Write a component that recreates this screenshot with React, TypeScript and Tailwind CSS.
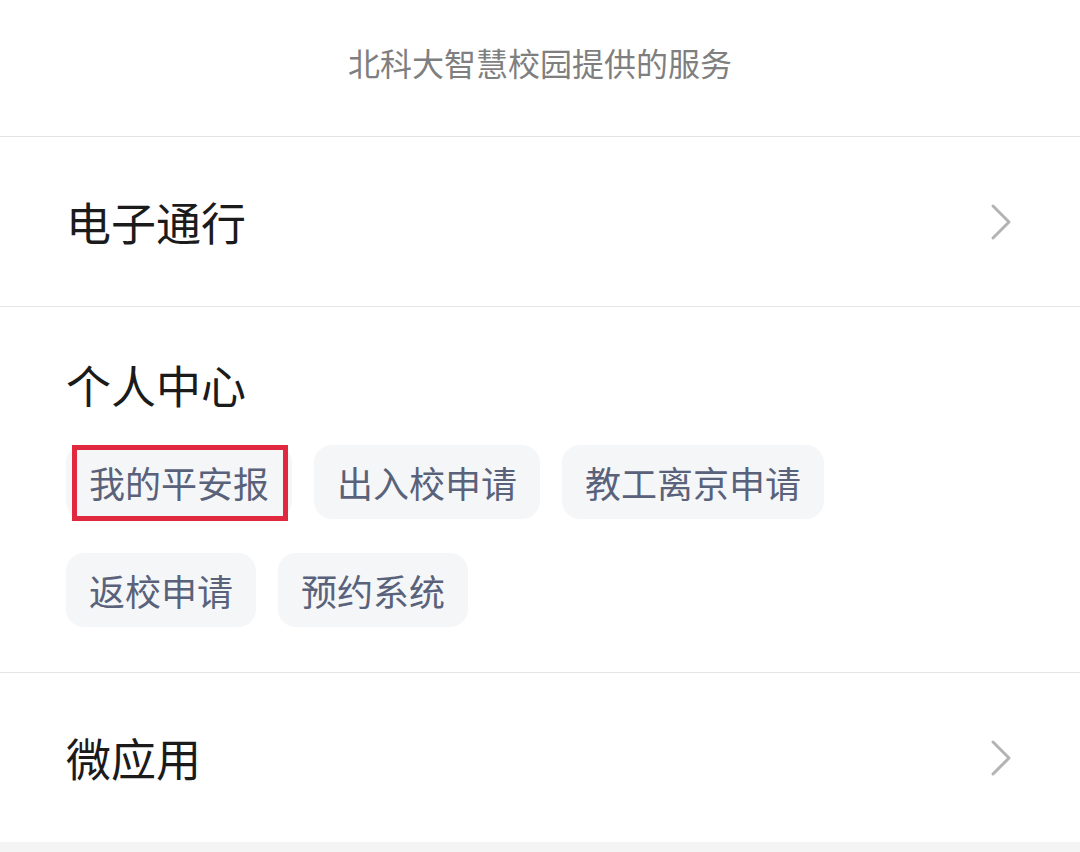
import React from "react";

const font = { fontFamily: '"Noto Sans CJK SC", "Noto Sans", sans-serif' };

function Chevron() {
  return (
    <svg width="22" height="38" viewBox="0 0 22 38" fill="none">
      <polyline points="3,3 19,19 3,35" stroke="#b3b3b3" strokeWidth="3" strokeLinecap="round" strokeLinejoin="round" fill="none" />
    </svg>
  );
}

function Tag({ label, marked }: { label: string; marked?: boolean }) {
  return (
    <div className="relative h-[74px] px-[23px] flex items-center rounded-[18px] bg-[#f5f6f8] text-[36px] leading-none text-[#59627a]">
      {label}
      {marked && <div className="absolute left-[6px] right-[4px] top-0 bottom-[-2px] border-[5px] border-[#e0283f]" />}
    </div>
  );
}

export default function App() {
  return (
    <div className="w-[1080px] h-[852px] bg-white flex flex-col" style={font}>
      <div className="h-[137px] flex items-center justify-center text-[32px] text-[#7f7f7f] border-b border-[#e3e3e3] pb-[12px]">
        北科大智慧校园提供的服务
      </div>
      <div className="h-[170px] flex items-center justify-between pl-[66px] pr-[68px] border-b border-[#e6e6e6]">
        <span className="text-[45px] leading-none text-[#1b1b1b]">电子通行</span>
        <Chevron />
      </div>
      <div className="pt-[55px] pb-[45px] pl-[66px] border-b border-[#e6e6e6]">
        <div className="text-[45px] leading-none text-[#1b1b1b]">个人中心</div>
        <div className="mt-[38px] flex flex-wrap gap-x-[22px] gap-y-[34px] w-[900px]">
          <Tag label="我的平安报" marked />
          <Tag label="出入校申请" />
          <Tag label="教工离京申请" />
          <Tag label="返校申请" />
          <Tag label="预约系统" />
        </div>
      </div>
      <div className="flex-1 flex items-center justify-between pl-[66px] pr-[68px]">
        <span className="text-[45px] leading-none text-[#1b1b1b]">微应用</span>
        <Chevron />
      </div>
      <div className="h-[10px] bg-[#f4f4f4]" />
    </div>
  );
}
